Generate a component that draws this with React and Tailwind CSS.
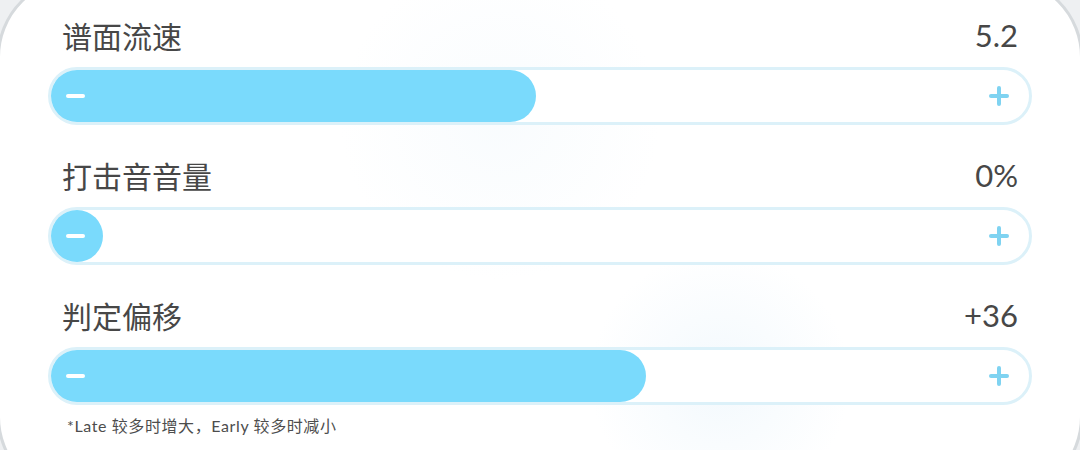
import React from "react";

const rows = [
  { label: "谱面流速", value: "5.2", fill: 485 },
  { label: "打击音音量", value: "0%", fill: 52 },
  { label: "判定偏移", value: "+36", fill: 595 },
];

function Slider({ fill }) {
  return (
    <div className="relative h-[58px] rounded-full border-[3px] border-[#dcf1f9] bg-white">
      <div
        className="h-full rounded-full bg-[#7adafc]"
        style={{ width: fill }}
      />
      <div className="absolute left-[15px] top-1/2 h-[4px] w-[19px] -translate-y-1/2 rounded-full bg-white" />
      <div className="absolute right-[20px] top-1/2 h-[20px] w-[20px] -translate-y-1/2">
        <div className="absolute left-0 top-[8px] h-[4px] w-[20px] rounded-full bg-[#7fd3f1]" />
        <div className="absolute left-[8px] top-0 h-[20px] w-[4px] rounded-full bg-[#7fd3f1]" />
      </div>
    </div>
  );
}

export default function App() {
  return (
    <div className="h-[450px] w-[1080px] overflow-hidden bg-[#eef0f2]">
      <div className="relative -ml-[3px] -mt-[23px] h-[520px] w-[1086px] overflow-hidden rounded-[80px] border-[3px] border-[#d6dadd] bg-white bg-[radial-gradient(circle_at_720px_400px,rgba(225,240,250,0.4)_0,rgba(255,255,255,0)_130px),radial-gradient(circle_at_500px_140px,rgba(230,242,250,0.25)_0,rgba(255,255,255,0)_160px)]">
        <div className="flex flex-col gap-[28px] px-[48px] pt-[33px]">
          {rows.map((r) => (
            <div key={r.label} className="flex flex-col">
              <div className="mb-[10px] flex h-[44px] items-center justify-between pl-[14px] pr-[14px] text-[#474747]">
                <span className="text-[30px] leading-none font-['Noto_Sans_CJK_SC',sans-serif]">
                  {r.label}
                </span>
                <span className="text-[31px] leading-none font-['Lato','Noto_Sans',sans-serif]">
                  {r.value}
                </span>
              </div>
              <Slider fill={r.fill} />
            </div>
          ))}
        </div>
        <div className="mt-[12px] pl-[67px] text-[16px] leading-[18px] tracking-[0.6px] text-[#4d4d4d] font-['Lato','Noto_Sans_CJK_SC',sans-serif]">
          *Late 较多时增大，Early 较多时减小
        </div>
      </div>
    </div>
  );
}
